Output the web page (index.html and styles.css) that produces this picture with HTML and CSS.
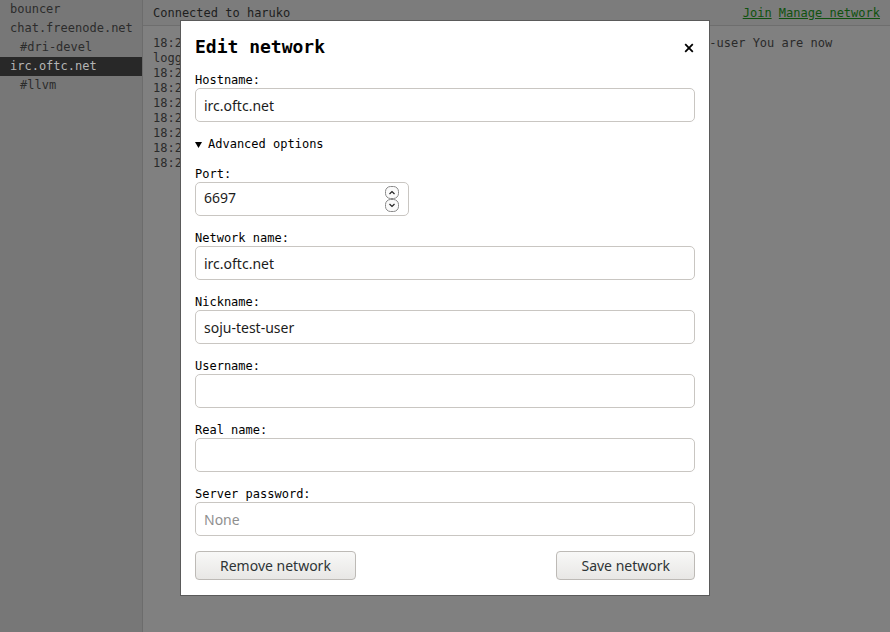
FILE: index.html
```html
<!DOCTYPE html>
<html>
<head>
<meta charset="utf-8">
<link rel="stylesheet" href="styles.css">
</head>
<body>
<div class="app">
  <nav class="sidebar">
    <div class="item">bouncer</div>
    <div class="item">chat.freenode.net</div>
    <div class="item channel">#dri-devel</div>
    <div class="item active">irc.oftc.net</div>
    <div class="item channel">#llvm</div>
  </nav>
  <main class="main">
    <header class="topbar">
      <span>Connected to haruko</span>
      <span class="links"><a href="#">Join</a> <a href="#">Manage network</a></span>
    </header>
    <div class="log">
      <div class="line">18:22 oftc.net soju-test-user!soju-test-user@localhost logged in as soju-test-user You are now logged in as soju-test-user</div>
      <div class="line">18:22 Connected</div>
      <div class="line">18:22 Welcome</div>
      <div class="line">18:22 Host</div>
      <div class="line">18:22 Created</div>
      <div class="line">18:23 Users</div>
      <div class="line">18:23 MOTD</div>
      <div class="line">18:23 End</div>
    </div>
  </main>
</div>

<div class="dialog">
  <div class="dialog-header">
    <h2>Edit network</h2>
    <button class="close" aria-label="Close">
      <svg width="10" height="10" viewBox="0 0 10 10"><path d="M1.2 1.2L8.8 8.8M8.8 1.2L1.2 8.8" stroke="#000" stroke-width="1.8"/></svg>
    </button>
  </div>
  <form class="form">
    <div class="field">
      <label>Hostname:</label>
      <input class="input" type="text" value="irc.oftc.net">
    </div>
    <details open class="advanced">
      <summary><svg class="tri" width="7" height="6" viewBox="0 0 7 6"><path d="M0 0H7L3.5 6Z" fill="#000"/></svg>Advanced options</summary>
      <div class="field">
        <label>Port:</label>
        <div class="numfield">
          <input class="numinput" type="text" value="6697">
          <svg class="spin" width="14" height="26" viewBox="0 0 14 26">
            <rect x="0.5" y="0.5" width="13" height="12" rx="5" fill="#fafafa" stroke="#8a8a8a"/>
            <rect x="0.5" y="13.5" width="13" height="12" rx="5" fill="#fafafa" stroke="#8a8a8a"/>
            <path d="M4.5 8L7 5.5L9.5 8" fill="none" stroke="#222" stroke-width="1.2"/>
            <path d="M4.5 18L7 20.5L9.5 18" fill="none" stroke="#222" stroke-width="1.2"/>
          </svg>
        </div>
      </div>
      <div class="field">
        <label>Network name:</label>
        <input class="input" type="text" value="irc.oftc.net">
      </div>
      <div class="field">
        <label>Nickname:</label>
        <input class="input" type="text" value="soju-test-user">
      </div>
      <div class="field">
        <label>Username:</label>
        <input class="input" type="text" value="">
      </div>
      <div class="field">
        <label>Real name:</label>
        <input class="input" type="text" value="">
      </div>
      <div class="field">
        <label>Server password:</label>
        <input class="input" type="password" placeholder="None">
      </div>
    </details>
    <div class="actions">
      <button type="button" class="btn">Remove network</button>
      <button type="button" class="btn">Save network</button>
    </div>
  </form>
</div>
</body>
</html>
```

FILE: styles.css
```css
* { box-sizing: border-box; }
html, body { margin: 0; height: 100%; }
body {
  font-family: "DejaVu Sans Mono", monospace;
  font-size: 12px;
  color: #2a2a2a;
  background: #808080;
  overflow: hidden;
}
.app {
  display: grid;
  grid-template-columns: 143px 1fr;
  height: 100vh;
}
.sidebar {
  background: #777777;
  border-right: 1px solid #6c6c6c;
}
.item {
  height: 19px;
  line-height: 19px;
  padding-left: 10px;
  color: #2c2c2c;
  white-space: nowrap;
}
.item.channel { padding-left: 20px; }
.item.active { background: #282828; color: #b4b4b4; }
.main {
  display: flex;
  flex-direction: column;
  background: #808080;
  min-width: 0;
}
.topbar {
  height: 26px;
  border-bottom: 1px solid #6e6e6e;
  background: #7c7c7c;
  display: flex;
  justify-content: space-between;
  align-items: center;
  padding: 0 10px;
  color: #1e1e1e;
}
.links a { color: #0f520f; }
.log {
  padding: 10px 10px;
  line-height: 15px;
  color: #2a2a2a;
}
.dialog {
  position: absolute;
  left: 180px;
  top: 20px;
  width: 530px;
  background: #fff;
  border: 1px solid #5a5a5a;
  padding: 15px 14px 15px;
  color: #000;
}
.dialog-header {
  display: flex;
  justify-content: space-between;
  align-items: center;
  margin-bottom: 15px;
}
.dialog-header h2 {
  margin: 0;
  font-size: 18px;
  line-height: 22px;
  font-weight: bold;
}
.close {
  border: 0;
  background: none;
  padding: 0;
  margin-right: 1px;
  margin-top: 2px;
  width: 10px;
  height: 10px;
  display: flex;
}
.field { margin-bottom: 15px; }
.field label {
  display: block;
  line-height: 15px;
}
.input, .numfield {
  display: block;
  width: 100%;
  height: 34px;
  border: 1px solid #c9c6c2;
  border-radius: 5px;
  padding: 0 8px;
  font-family: "Noto Sans", sans-serif;
  font-size: 14px;
  color: #1c1c1c;
  background: #fff;
  outline: none;
}
.input::placeholder { color: #8f8f8f; }
.numfield {
  width: 214px;
  display: flex;
  align-items: center;
  padding-right: 9px;
}
.numinput {
  flex: 1;
  min-width: 0;
  border: 0;
  padding: 0;
  margin-bottom: 3px;
  font: inherit;
  color: inherit;
  outline: none;
}
.advanced summary {
  list-style: none;
  line-height: 15px;
  margin-bottom: 15px;
  display: flex;
  align-items: center;
  gap: 6px;
}
.advanced summary::-webkit-details-marker { display: none; }
.tri { display: block; }
.actions {
  display: flex;
  justify-content: space-between;
}
.btn {
  height: 29px;
  padding: 0 24px;
  border: 1px solid #bdbab6;
  border-radius: 4px;
  background: linear-gradient(#f8f8f7, #e8e7e5);
  font-family: "Noto Sans", sans-serif;
  font-size: 14px;
  color: #2e3436;
}
```
